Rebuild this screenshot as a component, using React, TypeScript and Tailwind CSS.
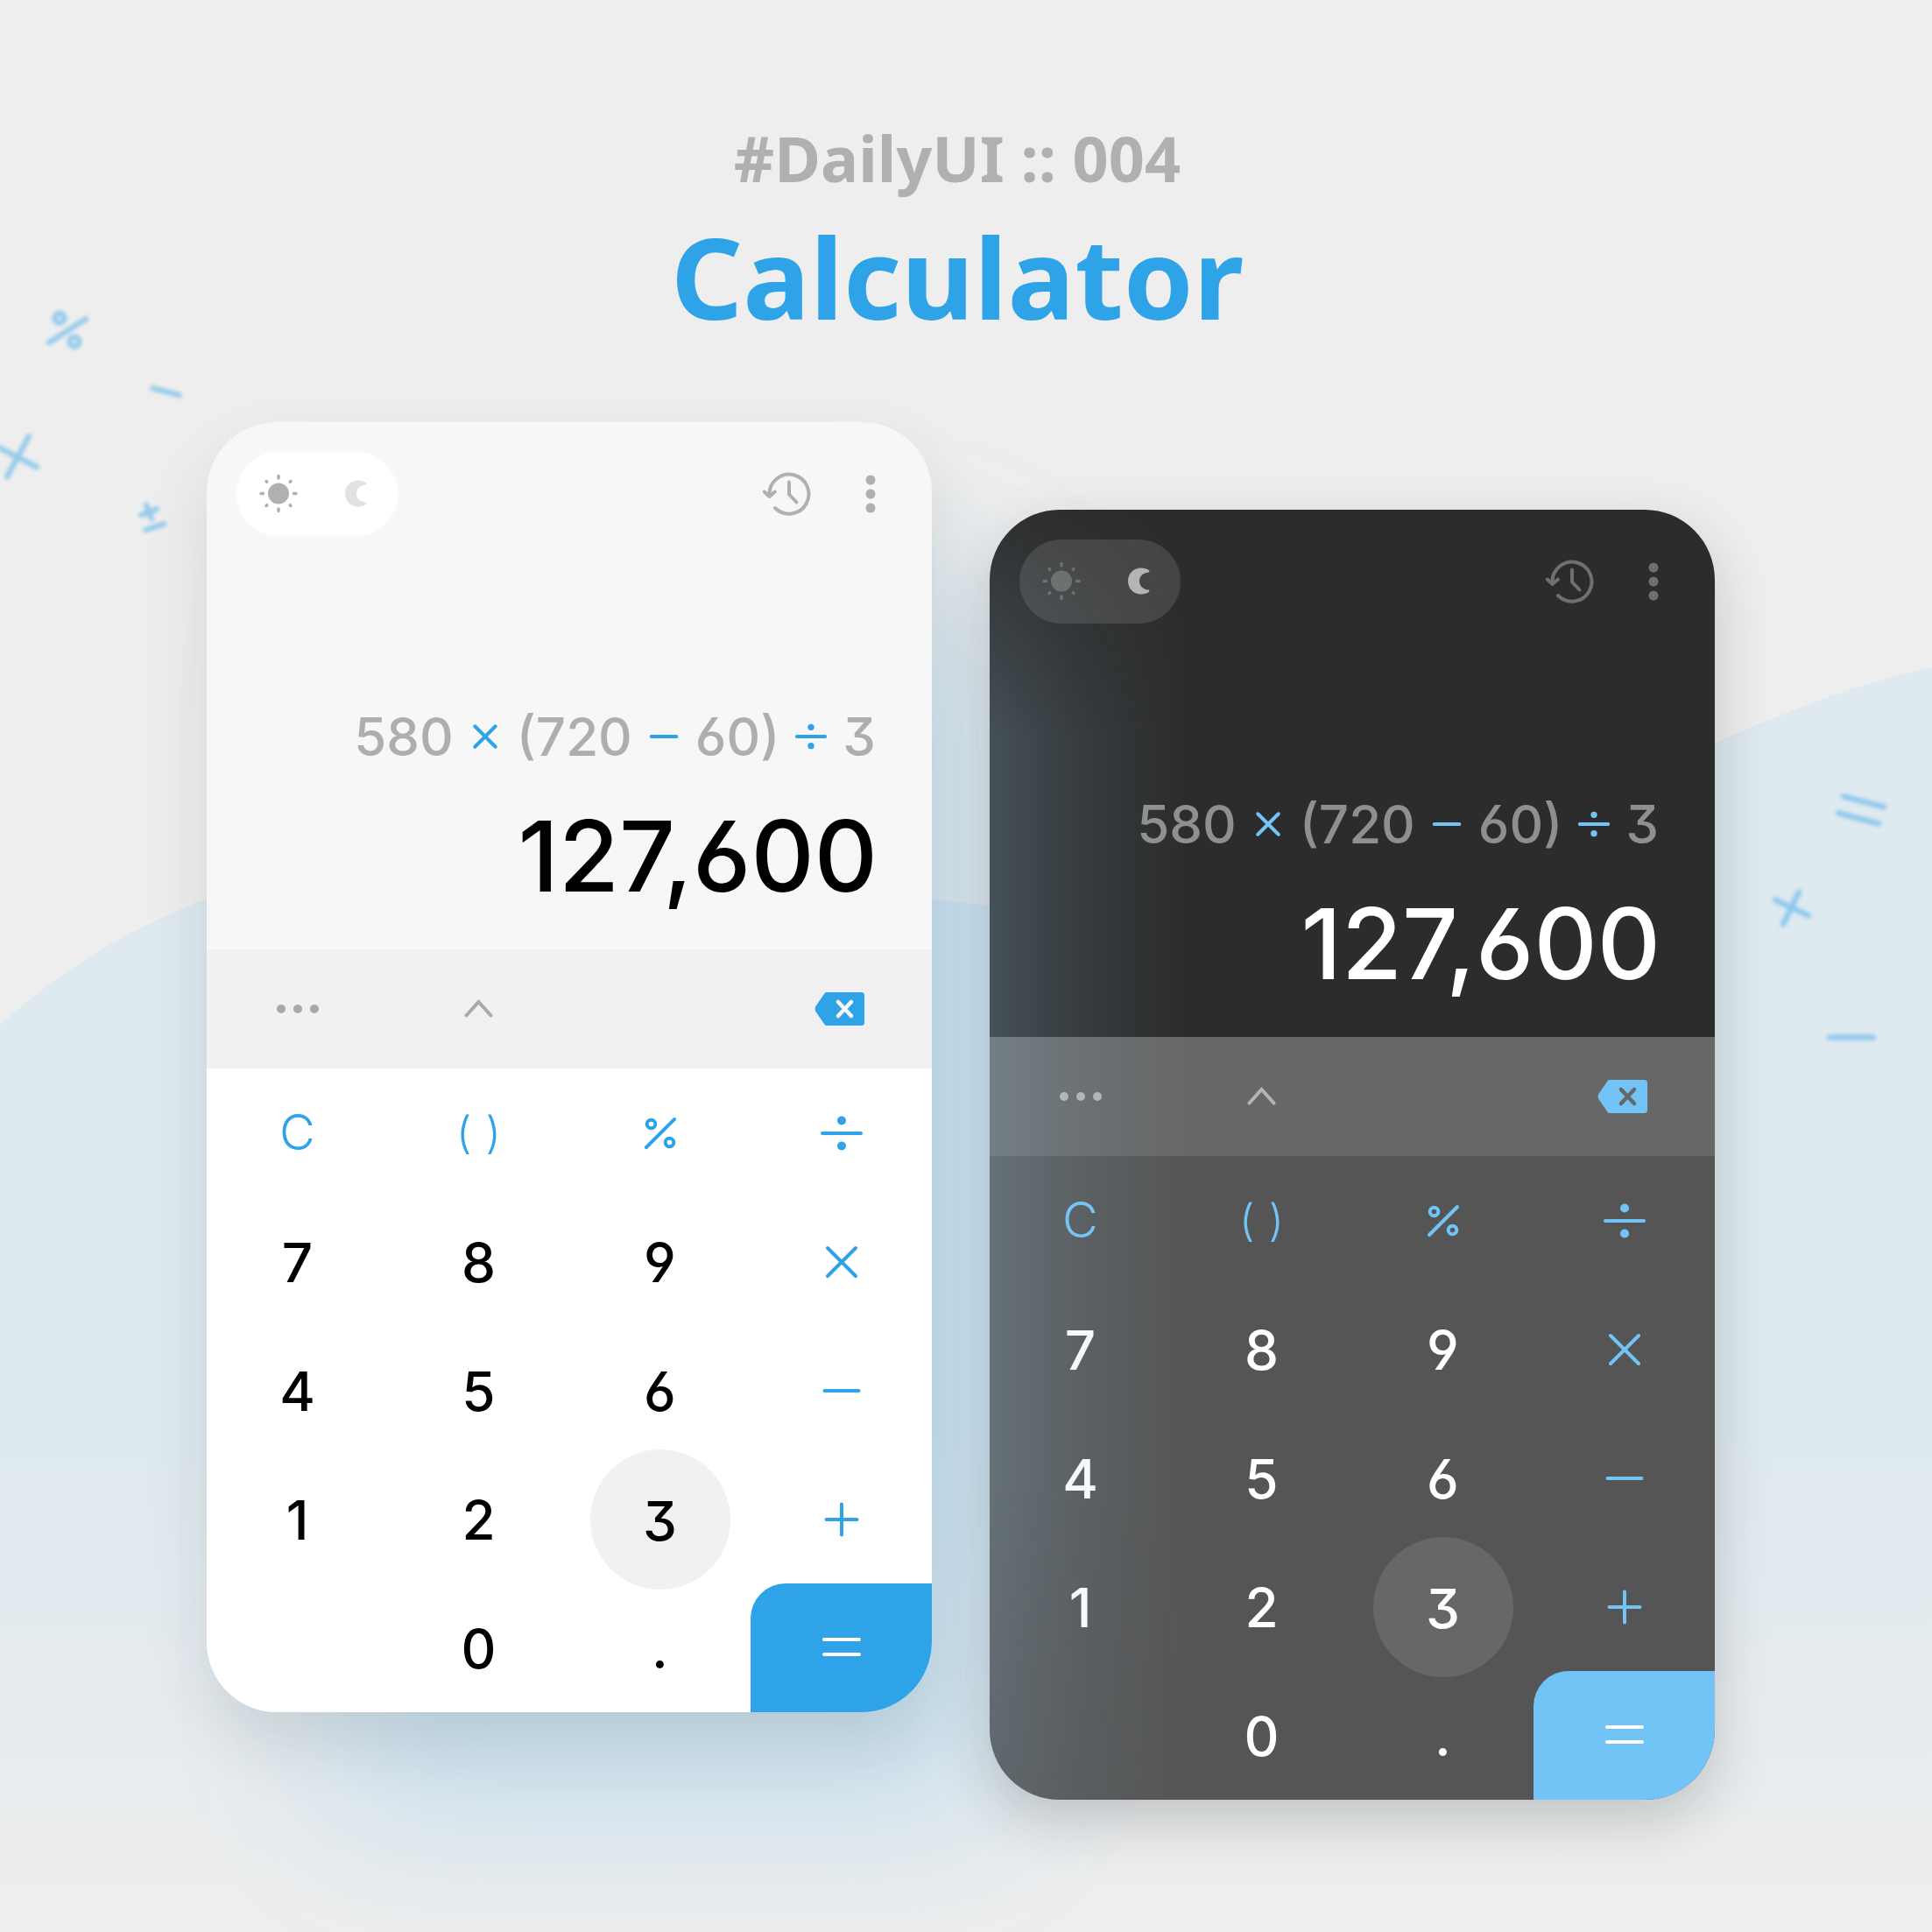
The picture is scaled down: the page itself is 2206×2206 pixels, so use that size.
import React from "react";

type Tone = "light" | "dark";

type IconProps = { name: string; className?: string; weight?: number };

const paths: Record<string, React.ReactNode> = {
  divide: (
    <>
      <path d="M8 30h44" />
      <circle cx="30" cy="15.500" r="5" fill="currentColor" stroke="none" />
      <circle cx="30" cy="44.500" r="5" fill="currentColor" stroke="none" />
    </>
  ),
  multiply: <path d="M14 14l32 32M46 14L14 46" />,
  minus: <path d="M10.500 30h39" />,
  plus: <path d="M12.500 30h35M30 12.500v35" />,
  equals: <path d="M10 20h40M10 37h40" />,
  percent: (
    <>
      <path d="M14 46L46 14" />
      <circle cx="19.500" cy="19.500" r="4.800" />
      <circle cx="40.500" cy="40.500" r="4.800" />
    </>
  ),
};

function KeyIcon({ name, className = "size-[60px]", weight = 4 }: IconProps) {
  return (
    <svg
      viewBox="0 0 60 60"
      aria-hidden="true"
      className={className}
      fill="none"
      stroke="currentColor"
      strokeWidth={weight}
      strokeLinecap="round"
    >
      {paths[name]}
    </svg>
  );
}

function SunIcon() {
  return (
    <svg viewBox="0 0 48 48" className="size-12" fill="none" stroke="currentColor" strokeWidth="3.500" aria-hidden="true">
      <circle cx="24" cy="23.500" r="12" fill="currentColor" stroke="none" />
      <path
        strokeLinecap="round"
        d="M24 3.500v2.500M24 41v2.500M4 23.500h2.500M41.500 23.500h2.500M10 9.500l.8.8M37.200 36.700L38 37.500M38 9.500l-.8.8M10.800 36.700L10 37.500"
      />
    </svg>
  );
}

function MoonIcon() {
  return (
    <svg viewBox="0 0 48 48" className="size-12" fill="currentColor" aria-hidden="true">
      <path d="M27 8.500C18 8.500 12 15.200 12 23.500s6 15 15 15c3.500 0 6.500-1 9-2.800.8-.6.5-1.900-.6-2.100C29 33 25 29 25 23.500S29 14 35.400 13.400c1.100-.2 1.400-1.500.6-2.100C33.500 9.500 30.500 8.500 27 8.500z" />
    </svg>
  );
}

function HistoryIcon() {
  return (
    <svg
      viewBox="0 0 60 56"
      className="h-14 w-[60px]"
      fill="none"
      stroke="currentColor"
      strokeWidth="4"
      strokeLinecap="round"
      strokeLinejoin="round"
      aria-hidden="true"
    >
      <path d="M10.500 29A22.500 22.500 0 1 1 17 44" />
      <path d="M4.800 25.500L10.600 31L16.800 25.500" />
      <path d="M33 14.500v14l8.500 9" />
    </svg>
  );
}

function DotsIcon({ vertical }: { vertical?: boolean }) {
  return vertical ? (
    <svg viewBox="0 0 12 48" className="h-12 w-3" fill="currentColor" aria-hidden="true">
      <circle cx="6" cy="8" r="5.500" />
      <circle cx="6" cy="24" r="5.500" />
      <circle cx="6" cy="40" r="5.500" />
    </svg>
  ) : (
    <svg viewBox="0 0 50 12" className="h-3 w-[50px]" fill="currentColor" aria-hidden="true">
      <circle cx="6" cy="6" r="5" />
      <circle cx="25" cy="6" r="5" />
      <circle cx="44" cy="6" r="5" />
    </svg>
  );
}

function ChevronIcon() {
  return (
    <svg
      viewBox="0 0 34 24"
      className="h-6 w-[34px]"
      fill="none"
      stroke="currentColor"
      strokeWidth="4"
      strokeLinecap="round"
      aria-hidden="true"
    >
      <path d="M2.500 19.500L16.500 4L30.500 19.500" />
    </svg>
  );
}

function BackspaceIcon({ cross }: { cross: string }) {
  return (
    <svg viewBox="0 0 62 40" className="h-10 w-[62px]" aria-hidden="true">
      <path
        fill="currentColor"
        d="M14 1h39.500a3.500 3.500 0 0 1 3.500 3.500v31a3.500 3.500 0 0 1-3.500 3.500H14c-1 0-1.900-.4-2.500-1.200L1.700 23.500c-1.400-2-1.400-5 0-7L11.500 2.200C12.100 1.400 13 1 14 1z"
      />
      <path d="M27 12l15 16M42 12L27 28" fill="none" strokeWidth="4.500" strokeLinecap="round" className={cross} />
    </svg>
  );
}

const themes = {
  light: {
    display: "bg-[#f7f7f7]",
    toggle: "bg-white shadow-[0_0_4px_rgba(255,255,255,0.8)]",
    sun: "text-[#b0b0b0]",
    moon: "text-[#e2e2e2]",
    tools: "text-[#b0b0b0]",
    expression: "text-[#aeaeae]",
    operator: "text-[#2ea3e8]",
    result: "text-black",
    bar: "bg-[#f1f1f1]",
    barIcons: "text-[#a9a9a9]",
    accent: "text-[#2ea3e8]",
    cross: "stroke-[#f7f7f7]",
    pad: "bg-white",
    digit: "text-black",
    pressed: "bg-[#f1f1f1]",
    equals: "bg-[#2ea3e8]",
    card: "shadow-[0_36px_72px_rgba(60,60,60,0.13),110px_150px_180px_-30px_rgba(46,163,232,0.18)]",
  },
  dark: {
    display: "bg-[#2c2c2c]",
    toggle: "bg-[#444444]",
    sun: "text-[#6c6c6c]",
    moon: "text-[#b4b4b4]",
    tools: "text-[#707070]",
    expression: "text-[#8f8f8f]",
    operator: "text-[#72c4f7]",
    result: "text-white",
    bar: "bg-[#676767]",
    barIcons: "text-[#b4b4b4]",
    accent: "text-[#72c4f7]",
    cross: "stroke-[#676767]",
    pad: "bg-[#555555]",
    digit: "text-white",
    pressed: "bg-[#676767]",
    equals: "bg-[#72c4f7]",
    card: "shadow-[0_24px_64px_rgba(30,30,30,0.2)]",
  },
};

const digitFont =
  "font-['Inter',sans-serif] font-medium [font-feature-settings:'cv03','cv04','cv09']";

const rows: string[][] = [
  ["C", "()", "percent", "divide"],
  ["7", "8", "9", "multiply"],
  ["4", "5", "6", "minus"],
  ["1", "2", "3", "plus"],
  ["", "0", ".", "equals"],
];

function Key({ value, tone }: { value: string; tone: Tone }) {
  const t = themes[tone];
  if (value === "") return <span />;
  if (value === "equals") {
    return (
      <button aria-label="equals" className={`flex items-center justify-center rounded-tl-[40px] text-white ${t.equals}`}>
        <KeyIcon name="equals" />
      </button>
    );
  }
  if (value in paths) {
    return (
      <button aria-label={value} className={`flex items-center justify-center ${t.accent}`}>
        <KeyIcon name={value} />
      </button>
    );
  }
  if (value === "C" || value === "()") {
    return (
      <button
        className={`flex items-center justify-center gap-4 pb-0.5 font-['Inter',sans-serif] font-[350] leading-none ${
          value === "C" ? "text-[56px]" : "text-[50px]"
        } ${t.accent}`}
      >
        {value.split("").map((c) => (
          <span key={c}>{c}</span>
        ))}
      </button>
    );
  }
  return (
    <button className={`flex items-center justify-center text-[62px] leading-none ${digitFont} ${t.digit}`}>
      {value === "3" ? (
        <span className={`-my-2 flex size-40 shrink-0 items-center justify-center rounded-full pt-1 ${t.pressed}`}>3</span>
      ) : (
        <span className="pt-0.5">{value}</span>
      )}
    </button>
  );
}

function Calculator({ tone, className }: { tone: Tone; className: string }) {
  const t = themes[tone];
  return (
    <section
      aria-label={`${tone} calculator`}
      className={`relative flex min-w-0 flex-1 flex-col rounded-[80px] ${t.card} ${className}`}
    >
      <div className="flex flex-col overflow-hidden rounded-[80px]">
        <div className={`flex flex-col pb-[43px] ${t.display}`}>
          <div className="flex items-center justify-between pl-[34px] pr-16 pt-[34px]">
            <div className={`flex h-24 w-[184px] items-center justify-between rounded-full px-6 ${t.toggle}`}>
              <button aria-label="Light theme" className={t.sun}>
                <SunIcon />
              </button>
              <button aria-label="Dark theme" className={t.moon}>
                <MoonIcon />
              </button>
            </div>
            <div className={`flex items-center gap-[60px] ${t.tools}`}>
              <button aria-label="History">
                <HistoryIcon />
              </button>
              <button aria-label="More options">
                <DotsIcon vertical />
              </button>
            </div>
          </div>
          <div
            className={`mt-[189px] flex items-center justify-end gap-3.5 pr-16 text-[60px] leading-[80px] ${digitFont} ${t.expression}`}
          >
            <span>580</span>
            <KeyIcon name="multiply" weight={5.5} className={`size-11 ${t.operator}`} />
            <span>(720</span>
            <KeyIcon name="minus" weight={5.5} className={`size-11 ${t.operator}`} />
            <span>60)</span>
            <KeyIcon name="divide" weight={5.5} className={`size-11 ${t.operator}`} />
            <span>3</span>
          </div>
          <output className={`mt-8 block pr-[62px] text-right text-[112px] leading-[128px] ${digitFont} ${t.result}`}>
            127,600
          </output>
        </div>
        <div className={`grid h-[136px] grid-cols-4 ${t.bar} ${t.barIcons}`}>
          <button aria-label="More functions" className="flex items-center justify-center">
            <DotsIcon />
          </button>
          <button aria-label="Expand" className="flex items-center justify-center">
            <ChevronIcon />
          </button>
          <span />
          <button aria-label="Backspace" className={`flex items-center justify-center ${t.accent}`}>
            <BackspaceIcon cross={t.cross} />
          </button>
        </div>
        <div className={`grid auto-rows-[147px] grid-cols-4 ${t.pad}`}>
          {rows.flat().map((value, i) => (
            <Key key={i} value={value} tone={tone} />
          ))}
        </div>
      </div>
      {tone === "dark" && (
        <div className="pointer-events-none absolute inset-0 rounded-[80px] bg-linear-to-r from-[rgba(155,205,235,0.23)] via-[rgba(155,205,235,0.1)] via-[100px] to-transparent to-[230px] [mask-image:linear-gradient(to_bottom,rgba(0,0,0,0.1),black_260px,black_75%,rgba(0,0,0,0.7))]" />
      )}
    </section>
  );
}

function Backdrop() {
  return (
    <svg
      viewBox="0 0 2206 2206"
      preserveAspectRatio="none"
      className="absolute inset-0 size-full"
      fill="none"
      aria-hidden="true"
    >
      <defs>
        <linearGradient id="hill" x1="0" y1="0" x2="0" y2="1">
          <stop offset="0" stopColor="#dee9f0" />
          <stop offset="0.600" stopColor="#dee9f0" />
          <stop offset="1" stopColor="#eeeeee" />
        </linearGradient>
      </defs>
      <path
        fill="url(#hill)"
        d="M0 1170C70 1106 150 1058 236 1026C500 930 760 980 1064 1026C1110 1032 1130 1034 1180 1036C1480 1040 1640 960 1958 848C2040 812 2120 780 2206 762V2206H0Z"
      />
      <g stroke="#2ea3e8" strokeWidth="6" strokeLinecap="round" opacity="0.480" className="blur-[2px]">
        <path d="M56 391L98 364" />
        <circle cx="68" cy="363" r="5.500" />
        <circle cx="85" cy="390" r="5.500" />
        <path d="M174 443L205 451" />
        <path d="M33 498L8 544M-5 509L42 533" />
        <path d="M161 588L179 581M167 576L173 592M166 605L187 598" />
        <path d="M2105 909L2151 921M2099 928L2145 940" />
        <path d="M2027 1027L2065 1045M2054 1018L2036 1055" />
        <path d="M2089 1184H2139" />
      </g>
    </svg>
  );
}

export default function App() {
  return (
    <main className="relative min-h-screen overflow-hidden bg-[#eeeeee] pr-3">
      <Backdrop />
      <div className="relative flex flex-col items-center pb-[152px] pt-[132px]">
        <header className="flex flex-col items-center gap-2 pr-2 text-center font-['Noto_Sans',sans-serif] font-bold">
          <p className="text-[72px] leading-[96px] text-[#b0b0b0]">#DailyUI :: 004</p>
          <h1 className="text-[128px] leading-[160px] text-[#2ea3e8]">Calculator</h1>
        </header>
        <div className="mt-[86px] flex w-full max-w-[1722px] items-start gap-[66px]">
          <Calculator tone="light" className="" />
          <Calculator tone="dark" className="mt-[100px]" />
        </div>
      </div>
    </main>
  );
}
